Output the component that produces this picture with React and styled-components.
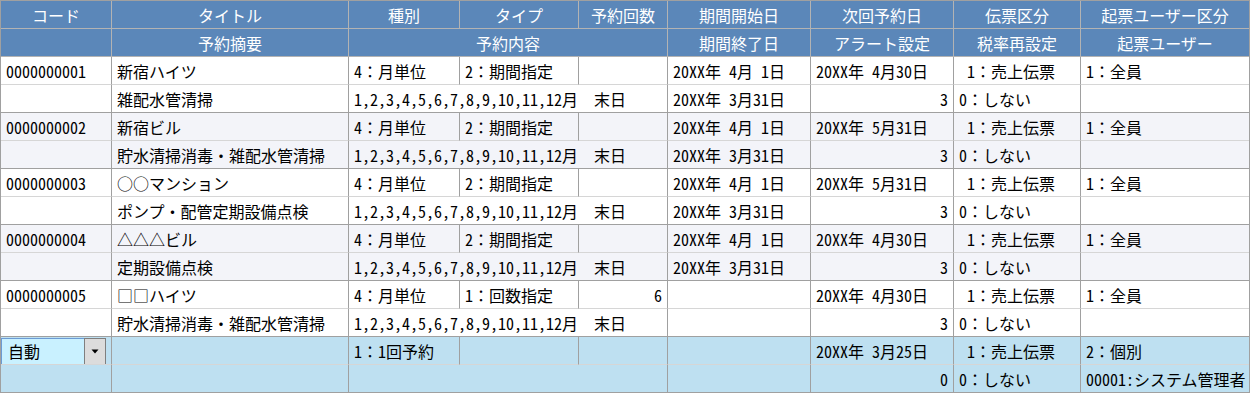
import React from "react";
import styled, { createGlobalStyle, css } from "styled-components";

const Global = createGlobalStyle`
  html, body { margin: 0; padding: 0; background: #ffffff; }
  body { font-family: "Noto Sans CJK JP", "Noto Sans", sans-serif; }
`;

const COLS = "111px 237px 111px 119px 89px 143px 143px 127px 168px";
const DARK = "#a0a0a0";
const LIGHT = "#d6d6d6";

const Grid = styled.div`
  display: grid;
  grid-template-columns: ${COLS};
  grid-auto-rows: 28px;
  width: 1250px;
  box-sizing: border-box;
  border: 1px solid ${DARK};
  border-bottom: none;
  font-family: "Noto Sans CJK JP", "Noto Sans", sans-serif;
  font-feature-settings: "hwid" 1;
  font-size: 16px;
  color: #000;
`;

const Wide = styled.span`
  font-feature-settings: "hwid" 0;
`;

const HeadCell = styled.div`
  grid-column: span ${(p) => p.$span || 1};
  box-sizing: border-box;
  display: flex;
  align-items: center;
  justify-content: center;
  background: #5b87b9;
  color: #ffffff;
  border-right: ${(p) => (p.$last ? "none" : "1px solid #b3b3b3")};
  border-bottom: 1px solid #b3b3b3;
  line-height: 1;
  white-space: pre;
`;

const Cell = styled.div`
  grid-column: span ${(p) => p.$span || 1};
  box-sizing: border-box;
  display: flex;
  align-items: center;
  justify-content: ${(p) => (p.$right ? "flex-end" : "flex-start")};
  padding: 0 5px 0 ${(p) => (p.$indent ? 13 : 5)}px;
  background: ${(p) =>
    p.$tone === "alt" ? "#f3f4f9" : p.$tone === "input" ? "#bee0f1" : "#ffffff"};
  border-right: ${(p) => (p.$last ? "none" : `1px solid ${DARK}`)};
  border-bottom: 1px solid ${(p) => (p.$sub ? LIGHT : DARK)};
  line-height: 1;
  white-space: pre;
  overflow: hidden;
  ${(p) =>
    p.$gap &&
    css`
      gap: ${p.$gap}px;
    `}
`;

const Select = styled.div`
  display: flex;
  align-items: stretch;
  box-sizing: border-box;
  width: 110px;
  height: 27px;
  margin-left: -5px;
  margin-top: 1px;
  border: 1px solid #6b9bd4;
  background: #c9f1ff;
`;

const SelectText = styled.span`
  flex: 1;
  display: flex;
  align-items: center;
  padding-left: 6px;
  line-height: 1;
`;

const SelectButton = styled.span`
  width: 22px;
  box-sizing: border-box;
  background: #dcdcdc;
  border: 1px solid #7f7f7f;
  display: flex;
  align-items: center;
  justify-content: center;
  margin: -1px -1px -1px 0;
`;

/* Keeps full-width punctuation full width while ASCII stays half width */
function T({ children }) {
  if (typeof children !== "string") return children ?? null;
  const parts = children.split(/([：・])/);
  return parts.map((p, i) =>
    p === "：" || p === "・" ? <Wide key={i}>{p}</Wide> : p
  );
}

const headTop = [
  "コード",
  "タイトル",
  "種別",
  "タイプ",
  "予約回数",
  "期間開始日",
  "次回予約日",
  "伝票区分",
  "起票ユーザー区分",
];

const months = "1,2,3,4,5,6,7,8,9,10,11,12月";

const records = [
  {
    code: "0000000001",
    title: "新宿ハイツ",
    kind: "4：月単位",
    type: "2：期間指定",
    count: "",
    start: "20XX年 4月 1日",
    next: "20XX年 4月30日",
    summary: "雑配水管清掃",
    end: "20XX年 3月31日",
  },
  {
    code: "0000000002",
    title: "新宿ビル",
    kind: "4：月単位",
    type: "2：期間指定",
    count: "",
    start: "20XX年 4月 1日",
    next: "20XX年 5月31日",
    summary: "貯水清掃消毒・雑配水管清掃",
    end: "20XX年 3月31日",
  },
  {
    code: "0000000003",
    title: "○○マンション",
    kind: "4：月単位",
    type: "2：期間指定",
    count: "",
    start: "20XX年 4月 1日",
    next: "20XX年 5月31日",
    summary: "ポンプ・配管定期設備点検",
    end: "20XX年 3月31日",
  },
  {
    code: "0000000004",
    title: "△△△ビル",
    kind: "4：月単位",
    type: "2：期間指定",
    count: "",
    start: "20XX年 4月 1日",
    next: "20XX年 4月30日",
    summary: "定期設備点検",
    end: "20XX年 3月31日",
  },
  {
    code: "0000000005",
    title: "□□ハイツ",
    kind: "4：月単位",
    type: "1：回数指定",
    count: "6",
    start: "",
    next: "20XX年 4月30日",
    summary: "貯水清掃消毒・雑配水管清掃",
    end: "",
  },
];

function Record({ r, tone }) {
  return (
    <>
      <Cell $tone={tone} $sub>{r.code}</Cell>
      <Cell $tone={tone} $sub>{r.title}</Cell>
      <Cell $tone={tone} $sub><T>{r.kind}</T></Cell>
      <Cell $tone={tone} $sub><T>{r.type}</T></Cell>
      <Cell $tone={tone} $sub $right>{r.count}</Cell>
      <Cell $tone={tone} $sub>{r.start}</Cell>
      <Cell $tone={tone} $sub>{r.next}</Cell>
      <Cell $tone={tone} $sub $indent><T>1：売上伝票</T></Cell>
      <Cell $tone={tone} $sub $last><T>1：全員</T></Cell>

      <Cell $tone={tone} />
      <Cell $tone={tone}><T>{r.summary}</T></Cell>
      <Cell $tone={tone} $span={3} $gap={16}>
        <span>{months}</span>
        <span>末日</span>
      </Cell>
      <Cell $tone={tone}>{r.end}</Cell>
      <Cell $tone={tone} $right>3</Cell>
      <Cell $tone={tone}><T>0：しない</T></Cell>
      <Cell $tone={tone} $last />
    </>
  );
}

export default function App() {
  return (
    <>
      <Global />
      <Grid>
        {headTop.map((h, i) => (
          <HeadCell key={h} $last={i === headTop.length - 1}>
            {h}
          </HeadCell>
        ))}
        <HeadCell />
        <HeadCell>予約摘要</HeadCell>
        <HeadCell $span={3}>予約内容</HeadCell>
        <HeadCell>期間終了日</HeadCell>
        <HeadCell>アラート設定</HeadCell>
        <HeadCell>税率再設定</HeadCell>
        <HeadCell $last>起票ユーザー</HeadCell>

        {records.map((r, i) => (
          <Record key={r.code} r={r} tone={i % 2 === 1 ? "alt" : "plain"} />
        ))}

        <Cell $tone="input" $sub>
          <Select>
            <SelectText>自動</SelectText>
            <SelectButton>
              <svg width="8" height="5" viewBox="0 0 8 5">
                <path d="M0.5 0.5 L7.5 0.5 L4 4.5 Z" fill="#000" />
              </svg>
            </SelectButton>
          </Select>
        </Cell>
        <Cell $tone="input" $sub />
        <Cell $tone="input" $sub><T>1：1回予約</T></Cell>
        <Cell $tone="input" $sub />
        <Cell $tone="input" $sub />
        <Cell $tone="input" $sub />
        <Cell $tone="input" $sub>20XX年 3月25日</Cell>
        <Cell $tone="input" $sub $indent><T>1：売上伝票</T></Cell>
        <Cell $tone="input" $sub $last><T>2：個別</T></Cell>

        <Cell $tone="input" />
        <Cell $tone="input" />
        <Cell $tone="input" $span={3} />
        <Cell $tone="input" />
        <Cell $tone="input" $right>0</Cell>
        <Cell $tone="input"><T>0：しない</T></Cell>
        <Cell $tone="input" $last>00001:システム管理者</Cell>
      </Grid>
    </>
  );
}
